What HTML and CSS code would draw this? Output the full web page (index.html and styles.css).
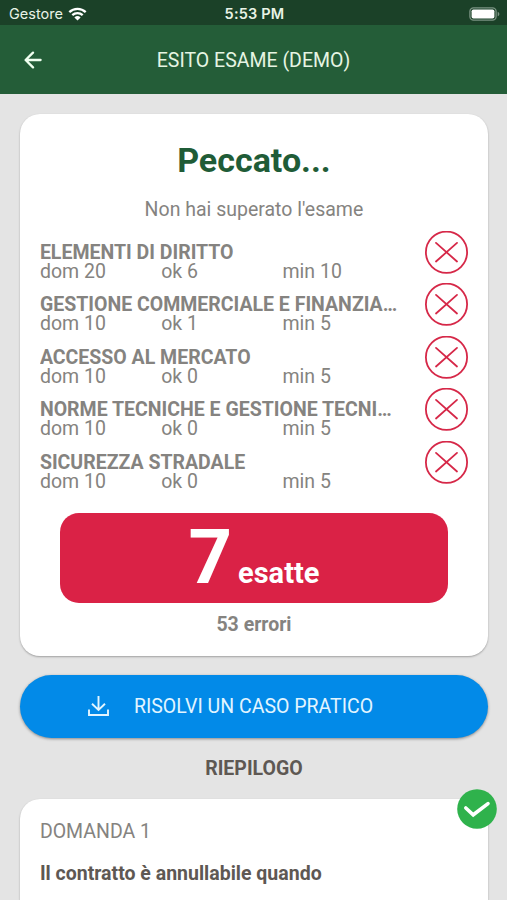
FILE: index.html
```
<!DOCTYPE html>
<html lang="it">
  <head>
    <meta charset="UTF-8" />
    <meta name="viewport" content="width=device-width, initial-scale=1.0" />
    <title>Esito esame</title>
    <link rel="stylesheet" href="styles.css">
  </head>
  <body>
    <div class="status">
      <div class="carrier">
        <span>Gestore</span>
        <svg class="wifi" width="19" height="14" viewBox="0 0 19 14">
          <path d="M1.3 5.2a11.8 11.8 0 0 1 16.4 0M4.3 8.2a7.6 7.6 0 0 1 10.4 0" fill="none" stroke="#fff" stroke-width="2.3" />
          <path d="M9.5 13.6l-3.1-3.1a4.5 4.5 0 0 1 6.2 0z" fill="#fff" />
        </svg>
      </div>
      <span class="time">5:53 PM</span>
      <svg class="battery" width="31" height="14" viewBox="0 0 31 14">
        <rect x="0.9" y="0.8" width="26.2" height="12.4" rx="3.6" fill="none" stroke="#7b9383" stroke-width="1.3" />
        <rect x="2.6" y="2.5" width="22.8" height="9" rx="1.8" fill="#fff" />
        <path d="M28.7 4.7c2.2 1 2.2 3.6 0 4.6z" fill="#7b9383" />
      </svg>
    </div>
    <header class="bar">
      <svg class="back" width="18" height="18" viewBox="0 0 18 18">
        <path d="M16.6 9H1.8M9 1.6L1.6 9L9 16.4" />
      </svg>
      <h1>ESITO ESAME (DEMO)</h1>
    </header>

    <main>
      <section class="card result">
        <h2>Peccato...</h2>
        <p class="message">Non hai superato l'esame</p>
        <ul class="subjects">
          <li>
            <div class="subject">
              <h3>ELEMENTI DI DIRITTO</h3>
              <div class="numbers"><span>dom 20</span><span>ok 6</span><span>min 10</span></div>
            </div>
            <svg class="wrong" viewBox="0 0 43 43"><circle cx="21.5" cy="21.2" r="20.6" /><path d="M11 11.9l21 18.6M32 11.9L11 30.5" /></svg>
          </li>
          <li>
            <div class="subject">
              <h3>GESTIONE COMMERCIALE E FINANZIARIA</h3>
              <div class="numbers"><span>dom 10</span><span>ok 1</span><span>min 5</span></div>
            </div>
            <svg class="wrong" viewBox="0 0 43 43"><circle cx="21.5" cy="21.2" r="20.6" /><path d="M11 11.9l21 18.6M32 11.9L11 30.5" /></svg>
          </li>
          <li>
            <div class="subject">
              <h3>ACCESSO AL MERCATO</h3>
              <div class="numbers"><span>dom 10</span><span>ok 0</span><span>min 5</span></div>
            </div>
            <svg class="wrong" viewBox="0 0 43 43"><circle cx="21.5" cy="21.2" r="20.6" /><path d="M11 11.9l21 18.6M32 11.9L11 30.5" /></svg>
          </li>
          <li>
            <div class="subject">
              <h3>NORME TECNICHE E GESTIONE TECNICA</h3>
              <div class="numbers"><span>dom 10</span><span>ok 0</span><span>min 5</span></div>
            </div>
            <svg class="wrong" viewBox="0 0 43 43"><circle cx="21.5" cy="21.2" r="20.6" /><path d="M11 11.9l21 18.6M32 11.9L11 30.5" /></svg>
          </li>
          <li>
            <div class="subject">
              <h3>SICUREZZA STRADALE</h3>
              <div class="numbers"><span>dom 10</span><span>ok 0</span><span>min 5</span></div>
            </div>
            <svg class="wrong" viewBox="0 0 43 43"><circle cx="21.5" cy="21.2" r="20.6" /><path d="M11 11.9l21 18.6M32 11.9L11 30.5" /></svg>
          </li>
        </ul>
        <div class="score"><span class="score-number">7</span><span class="score-label">esatte</span></div>
        <p class="errors">53 errori</p>
      </section>

      <button class="practice">
        <svg width="21" height="20" viewBox="0 0 21 20">
          <path d="M10.5 0v13.6M4 7.8l6.5 6.2L17 7.8M1 13.6V19h19v-5.4" />
        </svg>
        <span>RISOLVI UN CASO PRATICO</span>
      </button>

      <h2 class="summary-title">RIEPILOGO</h2>

      <section class="card question">
        <p class="question-number">DOMANDA 1</p>
        <p class="question-text">Il contratto è annullabile quando</p>
        <svg class="right" viewBox="0 0 40 40">
          <circle cx="20" cy="20" r="19.8" fill="#2fb24c" />
          <path d="M8.8 19l7.4 6.8L31 14.6" fill="none" stroke="#fff" stroke-width="3.6" stroke-linecap="round" />
        </svg>
      </section>
    </main>
  </body>
</html>
```

FILE: styles.css
```
* {
  box-sizing: border-box;
}
body {
  display: flex;
  flex-direction: column;
  margin: 0;
  height: 900px;
  background: #e4e4e4;
  color: #858380;
  font-family: Roboto, sans-serif;
  font-size: 19.5px;
  line-height: 24px;
}
h1,
h2,
h3,
p,
ul {
  margin: 0;
  padding: 0;
}
.status {
  display: grid;
  grid-template-columns: 1fr auto 1fr;
  align-items: center;
  height: 25px;
  padding: 2px 7px 0 9px;
  background: #1b4128;
  color: #e9f3e6;
  font-family: Inter, sans-serif;
  font-size: 14.5px;
}
.carrier {
  display: flex;
  align-items: center;
  gap: 5px;
}
.time {
  font-weight: 600;
  letter-spacing: 0.2px;
}
.battery {
  justify-self: end;
}
.bar {
  display: grid;
  grid-template-columns: 40px 1fr 40px;
  align-items: center;
  height: 69px;
  padding: 0 24px;
  background: #245d38;
}
.bar h1 {
  padding-top: 2px;
  color: #e6f5e3;
  font-size: 19.5px;
  font-weight: 400;
  text-align: center;
}
.back {
  fill: none;
  stroke: #f0fff0;
  stroke-width: 2.3;
  stroke-linecap: round;
  stroke-linejoin: round;
}
main {
  display: flex;
  flex: 1;
  flex-direction: column;
  padding: 19.5px 19.5px 0 20.4px;
}
.card {
  background: #fff;
  border-radius: 20px;
  box-shadow: 0 1px 2px rgba(0, 0, 0, 0.3);
}
.result {
  height: 542px;
  padding: 26px 19.5px 0;
  text-align: center;
}
.result h2 {
  color: #1f5c37;
  font-size: 34px;
  line-height: 40px;
}
.message {
  margin-top: 18px;
}
.subjects {
  margin-top: 9px;
  list-style: none;
  text-align: left;
}
.subjects li {
  display: flex;
  justify-content: space-between;
  height: 52.5px;
}
.subject {
  width: 360px;
  padding-top: 10px;
}
.subject h3 {
  overflow: hidden;
  font-size: 19.5px;
  font-weight: 700;
  line-height: 24px;
  text-overflow: ellipsis;
  white-space: nowrap;
}
.numbers {
  display: grid;
  grid-template-columns: repeat(3, 121.3px);
  line-height: 13.5px;
}
.wrong {
  width: 43px;
  height: 43px;
  fill: none;
  stroke: #d62848;
  stroke-width: 1.8;
  stroke-linecap: round;
}
.score {
  display: flex;
  justify-content: center;
  align-items: baseline;
  gap: 6px;
  height: 90px;
  margin: 20px 20px 0;
  border-radius: 19px;
  background: #da2246;
  color: #fff;
  font-weight: 700;
  line-height: 89px;
}
.score-number {
  font-size: 76px;
}
.score-label {
  font-size: 29px;
}
.errors {
  margin-top: 9.5px;
  font-weight: 700;
}
.practice {
  display: flex;
  flex-shrink: 0;
  align-items: center;
  gap: 25px;
  width: 100%;
  height: 63px;
  margin: 19px 0;
  padding: 0 67.5px;
  border: none;
  border-radius: 32px;
  background: #028ae8;
  box-shadow: 0 1px 3px rgba(0, 0, 0, 0.4);
  color: #e2f5ff;
  font-family: inherit;
  font-size: 19.5px;
}
.practice svg {
  fill: none;
  stroke: #e2f5ff;
  stroke-width: 1.9;
}
.summary-title {
  color: #5e5853;
  font-size: 19.5px;
  font-weight: 700;
  text-align: center;
}
.question {
  position: relative;
  flex: 1;
  margin-top: 18.5px;
  padding: 21px 19.5px 0;
  border-radius: 20px 20px 0 0;
}
.question-text {
  margin-top: 18px;
  color: #5e5853;
  font-weight: 700;
}
.right {
  position: absolute;
  top: -10px;
  right: -9.5px;
  width: 40px;
  height: 40px;
}
```
